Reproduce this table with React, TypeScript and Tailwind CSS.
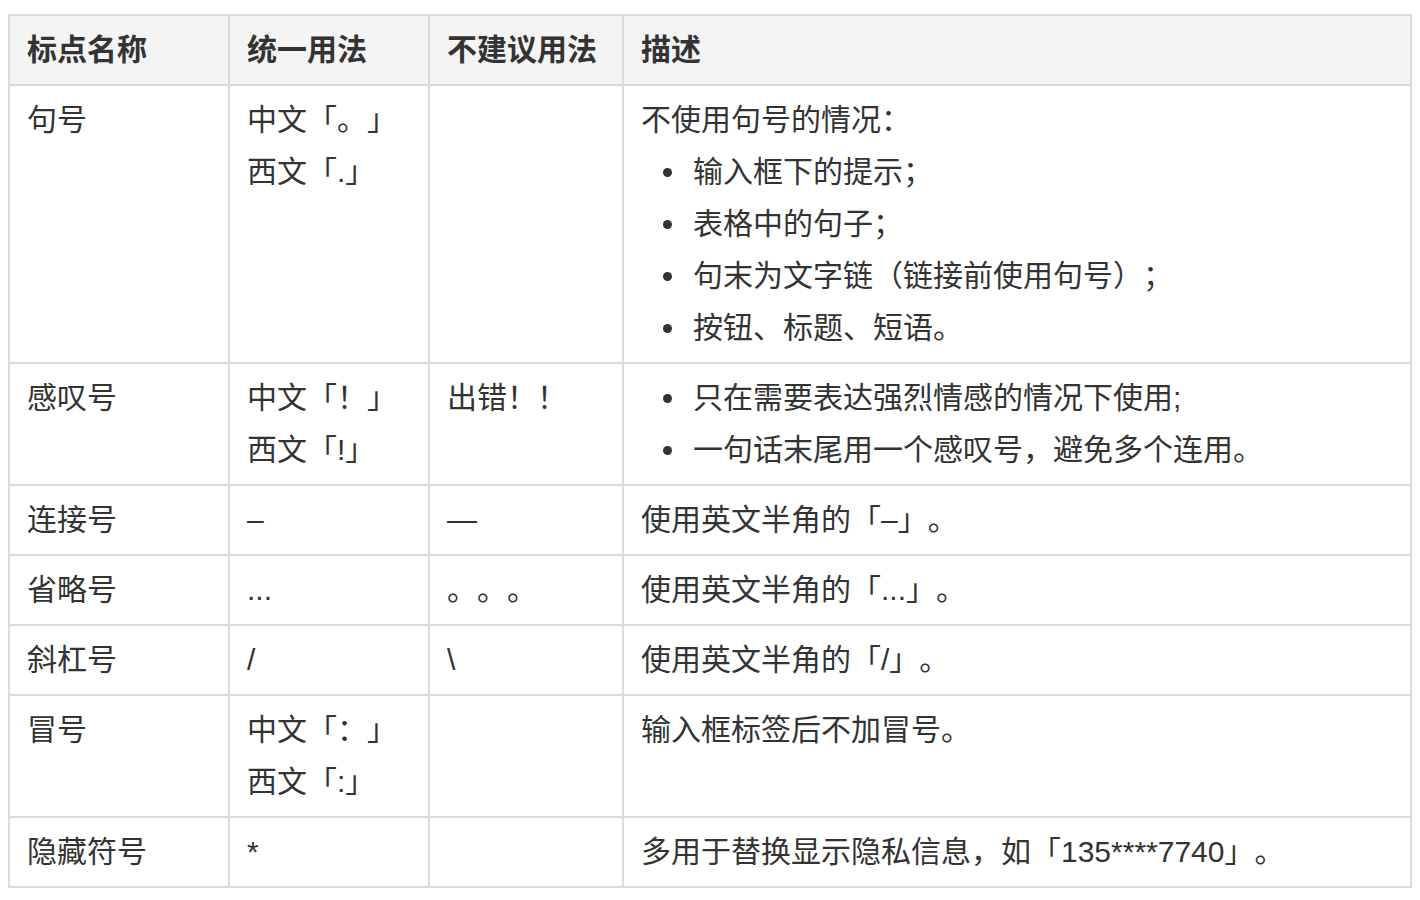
const font = "font-['Liberation_Sans','Noto_Sans_CJK_SC',sans-serif]"

type Row = { name: string; usage: string[]; bad: string; desc: string[]; intro?: string; list?: boolean }

const rows: Row[] = [
  {
    name: '句号',
    usage: ['中文「。」', '西文「.」'],
    bad: '',
    intro: '不使用句号的情况：',
    desc: ['输入框下的提示；', '表格中的句子；', '句末为文字链（链接前使用句号）；', '按钮、标题、短语。'],
    list: true,
  },
  {
    name: '感叹号',
    usage: ['中文「！」', '西文「!」'],
    bad: '出错！！',
    desc: ['只在需要表达强烈情感的情况下使用;', '一句话末尾用一个感叹号，避免多个连用。'],
    list: true,
  },
  { name: '连接号', usage: ['–'], bad: '—', desc: ['使用英文半角的「–」。'] },
  { name: '省略号', usage: ['...'], bad: '。。。', desc: ['使用英文半角的「...」。'] },
  { name: '斜杠号', usage: ['/'], bad: '\\', desc: ['使用英文半角的「/」。'] },
  { name: '冒号', usage: ['中文「：」', '西文「:」'], bad: '', desc: ['输入框标签后不加冒号。'] },
  { name: '隐藏符号', usage: ['*'], bad: '', desc: ['多用于替换显示隐私信息，如「135****7740」。'] },
]

const cell = 'border-2 border-[#dadada] px-[17px] py-[8px] align-top'

export default function App() {
  return (
    <div className={`min-h-[900px] bg-white pt-[14px] pl-[8px] ${font}`}>
      <table className="w-[1404px] table-fixed border-collapse text-[30px] leading-[52px] text-[#333333] [text-spacing-trim:space-all]">
        <colgroup>
          <col className="w-[220px]" />
          <col className="w-[200px]" />
          <col className="w-[194px]" />
          <col />
        </colgroup>
        <thead>
          <tr className="bg-[#f4f4f4] text-left">
            <th className={`${cell} font-semibold`}>标点名称</th>
            <th className={`${cell} font-semibold`}>统一用法</th>
            <th className={`${cell} font-semibold`}>不建议用法</th>
            <th className={`${cell} font-semibold`}>描述</th>
          </tr>
        </thead>
        <tbody>
          {rows.map((r) => (
            <tr key={r.name}>
              <td className={cell}>{r.name}</td>
              <td className={cell}>
                {r.usage.map((u) => (
                  <div key={u}>{u}</div>
                ))}
              </td>
              <td className={cell}>{r.bad}</td>
              <td className={cell}>
                {r.intro && <div>{r.intro}</div>}
                {r.list ? (
                  r.desc.map((d) => (
                    <div key={d} className="flex items-center">
                      <span className="flex w-[52px] shrink-0 justify-center">
                        <span className="block h-[9px] w-[9px] rounded-full bg-[#333333]" />
                      </span>
                      <span>{d}</span>
                    </div>
                  ))
                ) : (
                  r.desc.map((d) => <div key={d}>{d}</div>)
                )}
              </td>
            </tr>
          ))}
        </tbody>
      </table>
    </div>
  )
}
